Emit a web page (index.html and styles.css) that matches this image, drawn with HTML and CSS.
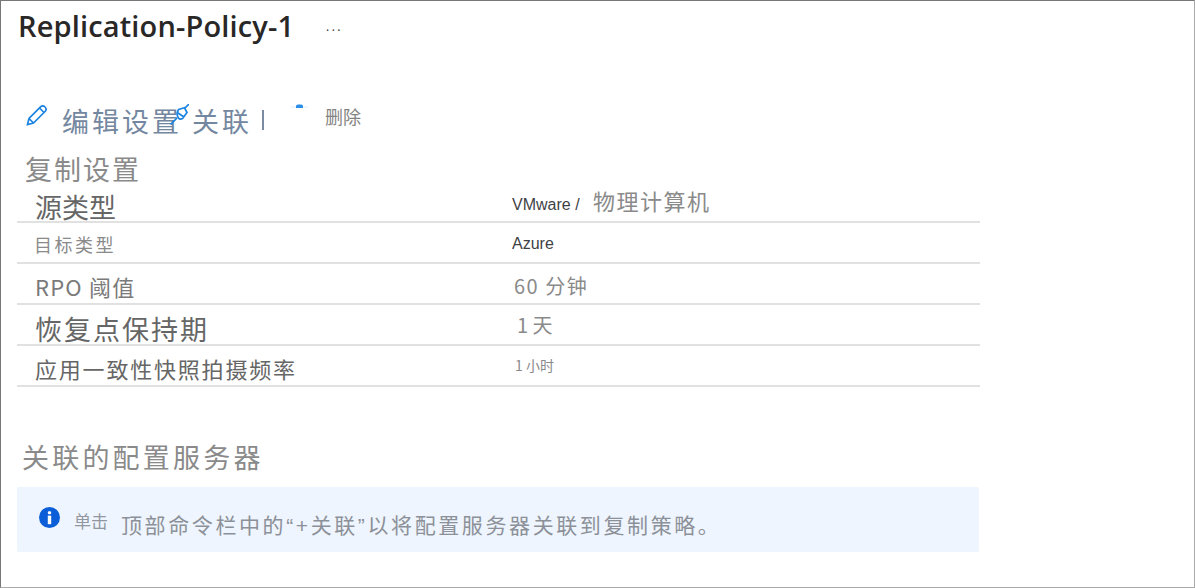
FILE: index.html
```html
<!DOCTYPE html>
<html lang="zh-CN">
<head>
<meta charset="utf-8">
<title>Replication-Policy-1</title>
<link rel="stylesheet" href="styles.css">
</head>
<body>
<main class="page">
  <header class="title-row">
    <h1 class="title">Replication-Policy-1</h1>
    <span class="more">···</span>
  </header>
  <div class="toolbar">
    <svg class="icon-pencil" width="22" height="22" viewBox="0 0 22 22" fill="none" stroke="#1b83e0" stroke-width="1.7">
      <path d="M1.5 20.5 L3 14.5 L15 2.5 Q17 1 19 3 Q21 5 19.5 7 L7.5 19 Z M3 14.5 L7.5 19 M13.5 4 L18 8.5"/>
    </svg>
    <span class="tool-text">编辑设置</span>
    <svg class="icon-link" width="19" height="21" viewBox="0 0 19 21" fill="none" stroke="#1b83e0" stroke-width="1.7">
      <path d="M0.5 20.5 L7 14 M19 0 L15 4 M8.5 5.5 L14.5 3.8 L17 8.5 L12.5 14.5 Q10 16 8.5 14 Q6.8 11.5 7.2 9 Z M8 9 L14 13"/>
    </svg>
    <span class="tool-text tool-assoc">关联</span>
    <span class="tool-sep"></span>
    <svg class="icon-del" width="17" height="4" viewBox="0 0 17 4">
      <rect x="0" y="2.5" width="17" height="1" fill="#dcecfb"/>
      <path d="M5 4 V2 Q5 0.5 7 0.5 H10 Q12 0.5 12 2 V4 Z" fill="#2a8ee6"/>
    </svg>
    <span class="tool-del">删除</span>
  </div>
  <h2 class="section section-settings">复制设置</h2>
  <div class="rows">
    <div class="row row-1"><span class="label l-source">源类型</span><span class="value v-first"><span class="latin">VMware / </span><span class="v-phys">物理计算机</span></span></div>
    <div class="row row-2"><span class="label l-target">目标类型</span><span class="value latin v-azure">Azure</span></div>
    <div class="row row-3"><span class="label l-rpo">RPO 阈值</span><span class="value v-rpo">60 分钟</span></div>
    <div class="row row-4"><span class="label l-retention">恢复点保持期</span><span class="value v-day">1 天</span></div>
    <div class="row row-5"><span class="label l-snap">应用一致性快照拍摄频率</span><span class="value v-hour">1 小时</span></div>
  </div>
  <h2 class="section section-assoc">关联的配置服务器</h2>
  <div class="notice">
    <svg class="icon-info" width="21" height="21" viewBox="0 0 22 22">
      <circle cx="11" cy="11" r="11" fill="#0b5ed7"/>
      <rect x="9.2" y="4.4" width="3.6" height="3.2" rx="1.4" fill="#fff"/>
      <rect x="9.2" y="9" width="3.6" height="9" fill="#fff"/>
    </svg>
    <span class="n-small">单击</span>
    <span class="n-main">顶部命令栏中的“+关联”以将配置服务器关联到复制策略。</span>
  </div>
</main>
</body>
</html>
```
FILE: styles.css
```css
* { box-sizing: border-box; }
html, body { margin: 0; padding: 0; background: #fff; }
body { font-family: "Noto Sans CJK SC", "Liberation Sans", sans-serif; }
.page {
  width: 1195px; height: 588px; overflow: hidden; position: relative;
  border-style: solid; border-width: 1px; border-color: #777 #aaa #aaa #777;
  padding-left: 16px;
}
.title-row { display: flex; align-items: center; height: 54px; padding-left: 1px; padding-bottom: 4px; }
.title { margin: 0; font: 600 29px/50px "Open Sans", "Liberation Sans", sans-serif; color: #292827; letter-spacing: 0.15px; }
.more { margin-left: 31px; margin-top: 6px; font: 400 14px/1 "Liberation Sans", sans-serif; color: #444; letter-spacing: 1px; }
.toolbar { position: relative; display: flex; align-items: center; height: 40px; margin-top: 44px; padding-left: 9px; padding-top: 4px; }
.icon-pencil { flex: none; margin-top: -12px; }
.tool-text { font-size: 27px; letter-spacing: 3px; color: #7487a0; line-height: 40px; margin-left: 14px; white-space: nowrap; }
.tool-assoc { margin-left: 10px; }
.icon-link { position: absolute; left: 153px; top: 5px; }
.tool-sep { width: 2px; height: 20px; background: #7a8ba3; margin-left: 10px; margin-top: -2px; }
.icon-del { flex: none; margin-left: 27px; margin-top: -30px; }
.tool-del { margin-left: 17px; font-size: 18px; color: #838383; line-height: 1; margin-top: -11px; }
.section { margin: 0; font-weight: 400; color: #8a8a8a; }
.section-settings { font-size: 27px; line-height: 38px; margin-top: 11px; padding-left: 8px; letter-spacing: 2px; }
.rows { width: 963px; margin-top: -1px; }
.row { height: 41px; border-bottom: 2px solid #e1e1e1; display: flex; align-items: center; padding-left: 18px; }
.row-1 { height: 36px; }
.label { width: 477px; flex: none; color: #6e6e6e; white-space: nowrap; }
.value { color: #8a8a8a; white-space: nowrap; }
.v-first { margin-top: -8px; }
.latin { font: 400 16px "Liberation Sans", sans-serif; color: #3f3f46; }
.v-azure { margin-top: 2px; }
.l-source { font-size: 27px; letter-spacing: 0; line-height: 1; color: #666; margin-top: 4px; }
.v-phys { font-size: 22px; letter-spacing: 1.5px; margin-left: 9px; }
.l-target { font-size: 18px; letter-spacing: 2.5px; color: #8a8a8a; margin-top: 2px; margin-left: -1px; width: 478px; }
.l-rpo { font-size: 22px; letter-spacing: 1.2px; color: #7a7a7a; margin-top: 4px; }
.v-rpo { font-size: 20px; letter-spacing: 1.5px; margin-left: 2px; margin-top: 4px; }
.l-retention { font-size: 27px; letter-spacing: 2px; color: #666; margin-top: 8px; }
.v-day { font-size: 20px; margin-left: 5px; }
.v-hour { font-size: 14px; margin-left: 3px; margin-top: -2px; }
.l-snap { font-size: 22px; letter-spacing: 1.8px; color: #666; margin-top: 4px; }
.section-assoc { font-size: 27px; line-height: 38px; margin-top: 51px; padding-left: 5px; letter-spacing: 3.2px; }
.notice { width: 962px; height: 65px; margin-top: 11px; background: #eef5fe; border-radius: 2px; display: flex; align-items: center; padding-left: 22px; padding-top: 8px; }
.icon-info { flex: none; margin-top: -12px; }
.n-small { font-size: 17px; color: #92979f; margin-left: 14px; margin-top: -6px; }
.n-main { font-family: "Liberation Sans", "Noto Sans CJK SC", sans-serif; font-size: 21px; letter-spacing: 2.6px; color: #8c9098; margin-left: 13px; white-space: nowrap; }
```
